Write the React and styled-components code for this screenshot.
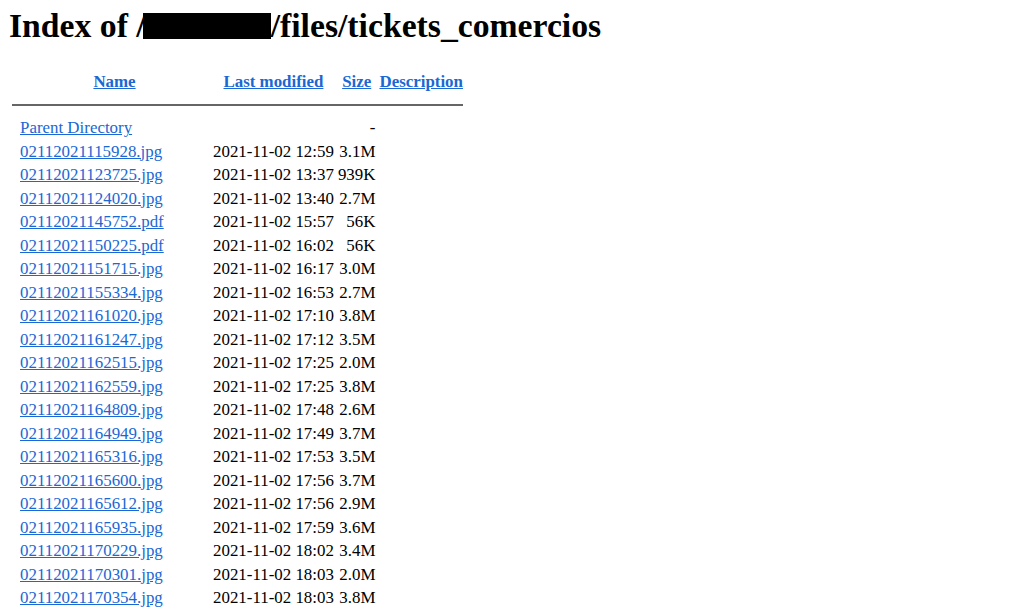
import React from "react";
import styled, { createGlobalStyle } from "styled-components";

const Global = createGlobalStyle`
  html, body { margin: 0; padding: 0; background: #fff; }
  body {
    padding: 0 8px;
    font-family: "Liberation Serif", "Times New Roman", serif;
    font-size: 16.9px;
    color: #000;
  }
`;

const Title = styled.h1`
  font-size: 33.7px;
  font-weight: bold;
  line-height: 38px;
  margin: 7px 0 24px 1px;
  white-space: nowrap;
`;

const Redacted = styled.span`
  display: inline-block;
  width: 128px;
  height: 26px;
  background: #000;
  margin-left: -3px;
  vertical-align: -2px;
`;

const Table = styled.table`
  border-collapse: separate;
  border-spacing: 2px;
`;

const Th = styled.th`
  padding: 1px;
  line-height: 19.5px;
  font-weight: bold;
  text-align: ${(p) => p.$align || "center"};
  vertical-align: top;
`;

const Td = styled.td`
  padding: 1px;
  line-height: 19.5px;
  white-space: nowrap;
  text-align: ${(p) => p.$align || "left"};
  vertical-align: top;
  width: ${(p) => p.$w || "auto"};
`;

const IconSlot = styled.span`
  display: inline-block;
  width: 5px;
`;

const Link = styled.a`
  color: #1a68d4;
  text-decoration: underline;
  cursor: pointer;
`;

const Rule = styled.hr`
  border: none;
  border-top: 2px solid #666;
  height: 0;
  margin: 8.3px 0 8.3px 1px;
`;

const rows = [
  ["02112021115928.jpg", "12:59", "3.1M"],
  ["02112021123725.jpg", "13:37", "939K"],
  ["02112021124020.jpg", "13:40", "2.7M"],
  ["02112021145752.pdf", "15:57", "56K"],
  ["02112021150225.pdf", "16:02", "56K"],
  ["02112021151715.jpg", "16:17", "3.0M"],
  ["02112021155334.jpg", "16:53", "2.7M"],
  ["02112021161020.jpg", "17:10", "3.8M"],
  ["02112021161247.jpg", "17:12", "3.5M"],
  ["02112021162515.jpg", "17:25", "2.0M"],
  ["02112021162559.jpg", "17:25", "3.8M"],
  ["02112021164809.jpg", "17:48", "2.6M"],
  ["02112021164949.jpg", "17:49", "3.7M"],
  ["02112021165316.jpg", "17:53", "3.5M"],
  ["02112021165600.jpg", "17:56", "3.7M"],
  ["02112021165612.jpg", "17:56", "2.9M"],
  ["02112021165935.jpg", "17:59", "3.6M"],
  ["02112021170229.jpg", "18:02", "3.4M"],
  ["02112021170301.jpg", "18:03", "2.0M"],
  ["02112021170354.jpg", "18:03", "3.8M"],
];

export default function App() {
  return (
    <>
      <Global />
      <Title>
        Index of /<Redacted />/files/tickets_comercios
      </Title>
      <Table>
        <tbody>
          <tr>
            <Th><IconSlot /></Th>
            <Th><Link>Name</Link></Th>
            <Th><Link>Last modified</Link></Th>
            <Th><Link>Size</Link></Th>
            <Th><Link>Description</Link></Th>
          </tr>
          <tr>
            <Th colSpan={5}><Rule /></Th>
          </tr>
          <tr>
            <Td><IconSlot /></Td>
            <Td $w="189px"><Link>Parent Directory</Link></Td>
            <Td>&nbsp;</Td>
            <Td $align="right">-</Td>
            <Td>&nbsp;</Td>
          </tr>
          {rows.map(([name, time, size]) => (
            <tr key={name}>
              <Td><IconSlot /></Td>
              <Td $w="189px"><Link>{name}</Link></Td>
              <Td $align="right">2021-11-02 {time}</Td>
              <Td $align="right">{size}</Td>
              <Td>&nbsp;</Td>
            </tr>
          ))}
        </tbody>
      </Table>
    </>
  );
}
